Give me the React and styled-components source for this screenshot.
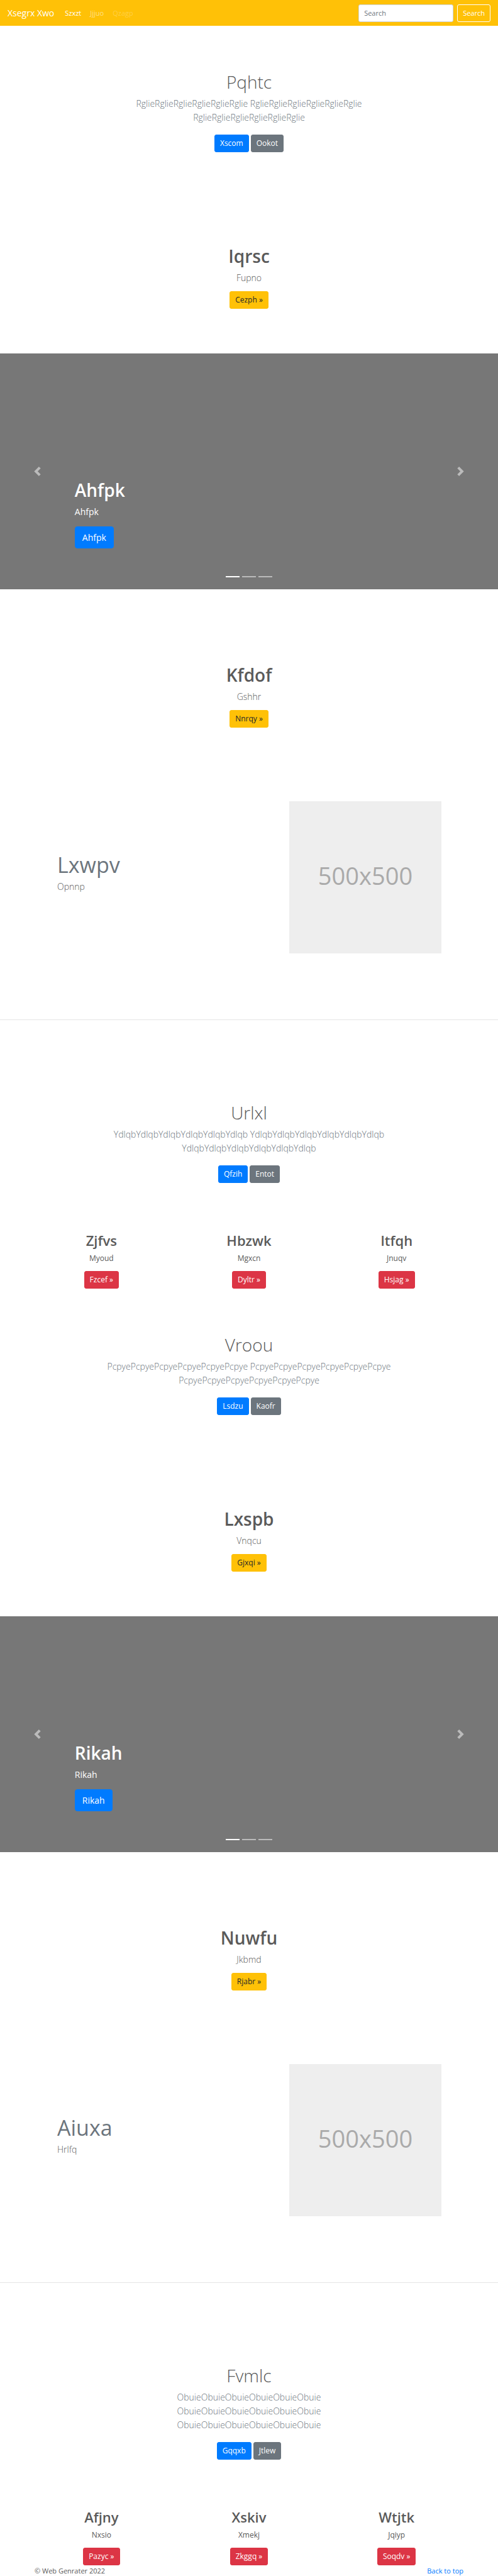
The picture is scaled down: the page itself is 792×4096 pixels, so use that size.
import React from "react";
import styled, { createGlobalStyle } from "styled-components";

const GlobalStyle = createGlobalStyle`
  *, *::before, *::after { box-sizing: border-box; }
  body {
    margin: 0;
    background: #fff;
    color: #5a5a5a;
    font-family: "Open Sans", "Noto Sans", sans-serif;
    font-size: 12px;
    line-height: 18px;
  }
  h1, h2, p { margin: 0; }
  button, input { font-family: inherit; }
`;

const Navbar = styled.nav`
  display: flex;
  align-items: center;
  height: 41px;
  padding: 0 12px;
  background: #ffc107;
`;

const Brand = styled.a`
  margin-right: 10px;
  color: #fff;
  font-size: 14px;
  line-height: 22px;
  text-decoration: none;
`;

const NavLinks = styled.div`
  display: flex;
  flex: 1;
  font-size: 11px;
`;

const NavLink = styled.a`
  padding: 0 7px;
  color: ${({ $tone }) =>
    $tone === "active" ? "#fff" : $tone === "disabled" ? "rgba(255,255,255,0.25)" : "rgba(255,255,255,0.5)"};
  text-decoration: none;
`;

const SearchForm = styled.form`
  display: flex;
  gap: 6px;
`;

const SearchInput = styled.input`
  width: 151px;
  height: 28px;
  padding: 0 8px;
  border: 1px solid #ced4da;
  border-radius: 3px;
  background: #fff;
  color: #495057;
  font-size: 11px;
  &::placeholder { color: #6c757d; opacity: 1; }
`;

const tones = {
  primary: ["#007bff", "#fff"],
  secondary: ["#6c757d", "#fff"],
  warning: ["#ffc107", "#212529"],
  danger: ["#dc3545", "#fff"],
};

const Button = styled.button`
  height: 28px;
  padding: 0 8px;
  border: 1px solid ${({ $tone }) => tones[$tone][0]};
  border-radius: 3px;
  background: ${({ $tone }) => tones[$tone][0]};
  color: ${({ $tone }) => tones[$tone][1]};
  font-size: 12px;
  line-height: 18px;
  cursor: pointer;
`;

const OutlineButton = styled(Button)`
  border-color: #fff;
  background: transparent;
  color: #fff;
  font-size: 11px;
`;

const LargeButton = styled(Button)`
  height: 35px;
  padding: 0 11px;
  border-radius: 4px;
  font-size: 14px;
  line-height: 22px;
`;

const Title = styled.h1`
  margin-bottom: 6px;
  font-size: 28px;
  line-height: 35px;
  font-weight: ${({ $light }) => ($light ? 300 : 600)};
`;

const Lead = styled.p`
  font-size: 14px;
  line-height: 22px;
  font-weight: ${({ $regular }) => ($regular ? 400 : 300)};
  color: ${({ $muted }) => ($muted ? "#6c757d" : "inherit")};
`;

const LeadLine = styled.span`
  display: block;
`;

const IntroSection = styled.section`
  display: flex;
  flex-direction: column;
  align-items: center;
  padding: 72px 12px 77px;
  text-align: center;
`;

const Actions = styled.div`
  display: flex;
  gap: 3px;
  margin-top: 16px;
`;

const BannerSection = styled.section`
  display: flex;
  flex-direction: column;
  align-items: center;
  padding: 71px 12px;
  text-align: center;
  ${Button} { margin-top: 10px; }
`;

const CarouselFrame = styled.section`
  position: relative;
  display: flex;
  flex-direction: column;
  justify-content: flex-end;
  align-items: flex-start;
  height: 375px;
  margin-bottom: 48px;
  padding: 0 15% 65px;
  background: #777;
  color: #fff;
  ${LargeButton} { margin-top: 12px; }
`;

const CarouselControl = styled.button`
  position: absolute;
  top: 0;
  bottom: 0;
  ${({ $side }) => $side}: 0;
  display: flex;
  align-items: center;
  justify-content: center;
  width: 15%;
  padding: 0;
  border: 0;
  background: none;
  opacity: 0.5;
  cursor: pointer;
`;

const Indicators = styled.div`
  position: absolute;
  bottom: 19px;
  left: 0;
  right: 0;
  display: flex;
  justify-content: center;
  gap: 4px;
`;

const Indicator = styled.button`
  width: 22px;
  height: 2px;
  padding: 0;
  border: 0;
  background: #fff;
  opacity: ${({ $active }) => ($active ? 1 : 0.5)};
`;

const Container = styled.div`
  max-width: 704px;
  margin: 0 auto;
`;

const Feature = styled(Container)`
  display: grid;
  grid-template-columns: 1fr 242px;
  padding: 46px 46px 47px 47px;
`;

const FeatureText = styled.div`
  padding-top: 78px;
`;

const FeatureTitle = styled.h2`
  color: #6c757d;
  font-size: 34px;
  line-height: 47px;
  font-weight: 400;
`;

const Placeholder = styled.div`
  display: flex;
  align-items: center;
  justify-content: center;
  aspect-ratio: 1;
  padding-bottom: 6px;
  background: #eee;
  color: #aaa;
  font-size: 38px;
  line-height: 50px;
`;

const Divider = styled.hr`
  margin: 58px 0;
  border: 0;
  border-top: 1px solid rgba(0, 0, 0, 0.1);
`;

const CardGrid = styled(Container)`
  display: grid;
  grid-template-columns: repeat(3, 1fr);
`;

const Card = styled.article`
  display: flex;
  flex-direction: column;
  align-items: center;
  ${Button} { margin-top: 11px; }
`;

const CardTitle = styled.h2`
  margin-bottom: 6px;
  font-size: 22px;
  line-height: 28px;
  font-weight: 600;
`;

const Footer = styled.footer`
  display: flex;
  justify-content: space-between;
  max-width: 704px;
  margin: 0 auto;
  padding: 0 11px;
  font-size: 11px;
  line-height: 17px;
`;

const FooterLink = styled.a`
  color: #007bff;
  text-decoration: none;
`;

function Intro({ title, lines, primary, secondary }) {
  return (
    <IntroSection>
      <Title $light>{title}</Title>
      <Lead $muted>
        {lines.map((line, i) => (
          <LeadLine key={i}>{line}</LeadLine>
        ))}
      </Lead>
      <Actions>
        <Button $tone="primary">{primary}</Button>
        <Button $tone="secondary">{secondary}</Button>
      </Actions>
    </IntroSection>
  );
}

function Banner({ title, text, action }) {
  return (
    <BannerSection>
      <Title>{title}</Title>
      <Lead>{text}</Lead>
      <Button $tone="warning">{action} »</Button>
    </BannerSection>
  );
}

function Chevron({ d }) {
  return (
    <svg width="15" height="15" viewBox="0 0 8 8" fill="#fff" aria-hidden="true">
      <path d={d} />
    </svg>
  );
}

function Carousel({ label }) {
  return (
    <CarouselFrame>
      <Title>{label}</Title>
      <Lead $regular>{label}</Lead>
      <LargeButton $tone="primary">{label}</LargeButton>
      <CarouselControl $side="left" aria-label="Previous">
        <Chevron d="M5.25 0l-4 4 4 4 1.5-1.5-2.5-2.5 2.5-2.5-1.5-1.5z" />
      </CarouselControl>
      <CarouselControl $side="right" aria-label="Next">
        <Chevron d="M2.75 0l-1.5 1.5 2.5 2.5-2.5 2.5 1.5 1.5 4-4-4-4z" />
      </CarouselControl>
      <Indicators>
        {[1, 2, 3].map((n) => (
          <Indicator key={n} $active={n === 1} aria-label={`Slide ${n}`} />
        ))}
      </Indicators>
    </CarouselFrame>
  );
}

function FeatureRow({ title, text }) {
  return (
    <Feature>
      <FeatureText>
        <FeatureTitle>{title}</FeatureTitle>
        <Lead>{text}</Lead>
      </FeatureText>
      <Placeholder>500x500</Placeholder>
    </Feature>
  );
}

function Cards({ items }) {
  return (
    <CardGrid>
      {items.map(([title, text, action]) => (
        <Card key={title}>
          <CardTitle>{title}</CardTitle>
          <p>{text}</p>
          <Button $tone="danger">{action} »</Button>
        </Card>
      ))}
    </CardGrid>
  );
}

const twoLines = (word) => {
  const run = word.repeat(6);
  return [`${run} ${run}`, run];
};

const threeLines = (word) => Array(3).fill(word.repeat(6));

export default function App() {
  return (
    <>
      <GlobalStyle />
      <Navbar id="top">
        <Brand href="#top">Xsegrx Xwo</Brand>
        <NavLinks>
          <NavLink href="#" $tone="active">Szxzt</NavLink>
          <NavLink href="#">Jjjuo</NavLink>
          <NavLink href="#" $tone="disabled" aria-disabled="true">Qzagp</NavLink>
        </NavLinks>
        <SearchForm role="search">
          <SearchInput type="text" placeholder="Search" aria-label="Search" />
          <OutlineButton type="button" $tone="warning">Search</OutlineButton>
        </SearchForm>
      </Navbar>
      <main>
        <Intro title="Pqhtc" lines={twoLines("Rglie")} primary="Xscom" secondary="Ookot" />
        <Banner title="Iqrsc" text="Fupno" action="Cezph" />
        <Carousel label="Ahfpk" />
        <Banner title="Kfdof" text="Gshhr" action="Nnrqy" />
        <FeatureRow title="Lxwpv" text="Opnnp" />
        <Divider />
        <Intro title="Urlxl" lines={twoLines("Ydlqb")} primary="Qfzih" secondary="Entot" />
        <Cards
          items={[
            ["Zjfvs", "Myoud", "Fzcef"],
            ["Hbzwk", "Mgxcn", "Dyltr"],
            ["Itfqh", "Jnuqv", "Hsjag"],
          ]}
        />
        <Intro title="Vroou" lines={twoLines("Pcpye")} primary="Lsdzu" secondary="Kaofr" />
        <Banner title="Lxspb" text="Vnqcu" action="Gjxqi" />
        <Carousel label="Rikah" />
        <Banner title="Nuwfu" text="Jkbmd" action="Rjabr" />
        <FeatureRow title="Aiuxa" text="Hrlfq" />
        <Divider />
        <Intro title="Fvmlc" lines={threeLines("Obuie")} primary="Gqqxb" secondary="Jtlew" />
        <Cards
          items={[
            ["Afjny", "Nxsio", "Pazyc"],
            ["Xskiv", "Xmekj", "Zkggq"],
            ["Wtjtk", "Jqiyp", "Soqdv"],
          ]}
        />
      </main>
      <Footer>
        <span>© Web Genrater 2022</span>
        <FooterLink href="#top">Back to top</FooterLink>
      </Footer>
    </>
  );
}
